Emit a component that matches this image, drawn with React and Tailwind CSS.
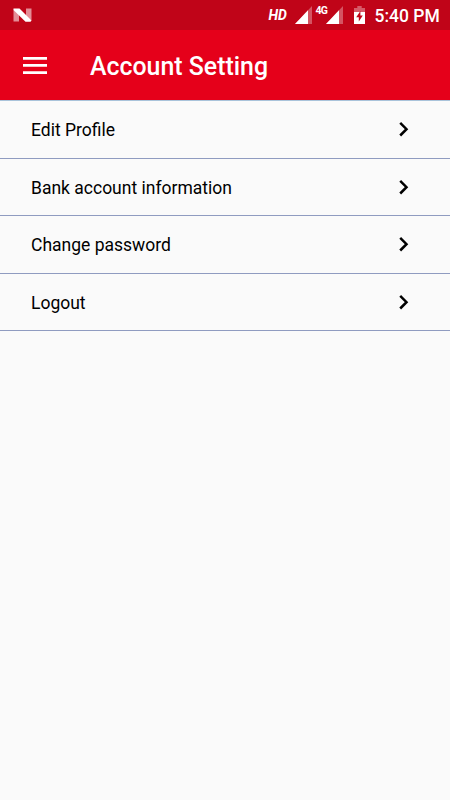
import React from 'react';

const items = ['Edit Profile', 'Bank account information', 'Change password', 'Logout'];

function Signal({ className }) {
  return (
    <svg className={className} width="17" height="18" viewBox="0 0 17 18">
      <path d="M0 18L17 0v18z" fill="#fff" fillOpacity="0.32" />
      <path d="M0 18L13 4.3V18z" fill="#fff" />
    </svg>
  );
}

function StatusBar() {
  return (
    <div className="h-[30px] bg-[#c00418] flex items-start text-white">
      <svg className="ml-[13px] mt-2 mr-auto" width="19" height="14" viewBox="0 0 19 14">
        <path d="M0.5 1.5L6 5v8.5H0.5zM13 0.5h5.5v12L13 9z" fill="#fff" fillOpacity="0.55" />
        <path d="M0.5 0.5h6L18.5 12.5L17.5 13.8h-5L0.5 2z" fill="#fff" />
      </svg>
      <span className="mt-[5px] w-[26px] text-[14px] leading-5 italic font-bold">HD</span>
      <Signal className="mt-1.5" />
      <span className="mt-1 ml-1 w-2.5 text-[10.5px] leading-[14px] font-bold whitespace-nowrap tracking-[-0.8px]">4G</span>
      <Signal className="mt-1.5" />
      <svg className="mt-1.5 ml-[11px]" width="11" height="18" viewBox="0 0 11 18">
        <path d="M3.3 0h4.4v2H11v4H0V2h3.3z" fill="#fff" fillOpacity="0.35" />
        <path d="M0 6h11v12H0z" fill="#fff" />
        <path d="M6.4 5L2.2 11.2h2.6v4.4l4-6.2H6.4z" fill="#c00418" />
      </svg>
      <span className="mt-[3px] ml-2.5 w-[75.5px] text-[17.5px] leading-[26px] font-medium whitespace-nowrap">5:40 PM</span>
    </div>
  );
}

export default function App() {
  return (
    <div className="w-[450px] h-[800px] bg-[#fafafa] font-['Roboto',sans-serif] overflow-hidden">
      <StatusBar />
      <header className="h-[70px] bg-[#e5001a] flex items-center text-white">
        <svg className="ml-[23px]" width="24" height="17" viewBox="0 0 24 17">
          <path d="M0 0h24v2.7H0zM0 7.1h24v2.7H0zM0 14.2h24v2.7H0z" fill="#fff" />
        </svg>
        <h1 className="ml-[43px] pt-[3px] text-[24.9px] font-medium">Account Setting</h1>
      </header>
      <ul className="border-t border-[#a9c3da]">
        {items.map((label) => (
          <li key={label} className="h-[57.5px] border-b border-[#8f9bc0] flex items-center justify-between pl-[31px] pr-[41px]">
            <span className="pt-[2.5px] text-[17.5px] text-black">{label}</span>
            <svg width="11" height="16" viewBox="0 0 11 16">
              <path d="M2.2 1.9l6.3 6.3-6.3 6.3" fill="none" stroke="#000" strokeWidth="2.5" />
            </svg>
          </li>
        ))}
      </ul>
    </div>
  );
}
